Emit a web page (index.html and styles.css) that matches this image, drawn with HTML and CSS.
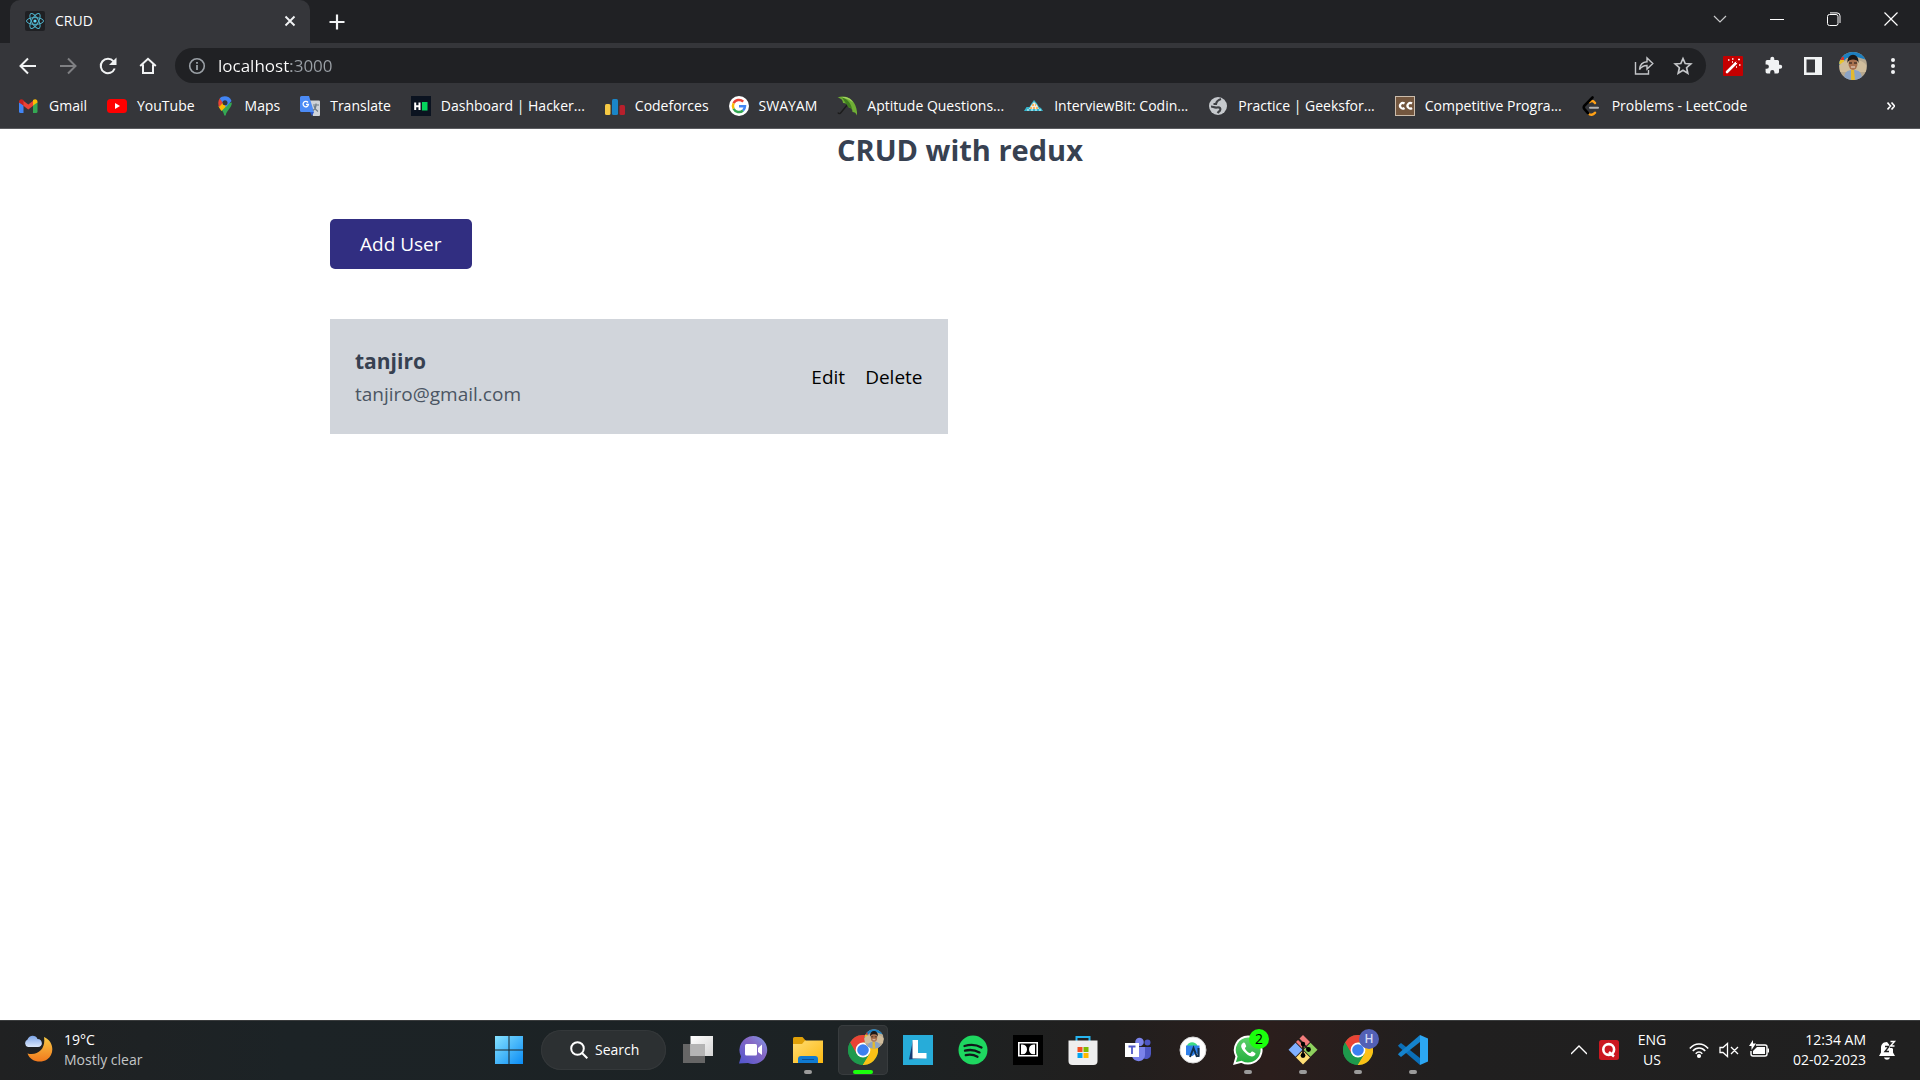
FILE: index.html
```html
<!DOCTYPE html>
<html lang="en">
<head>
<meta charset="utf-8">
<meta name="viewport" content="width=device-width, initial-scale=1">
<title>CRUD</title>
<link rel="stylesheet" href="styles.css">
</head>
<body>
<svg class="defs" width="0" height="0" aria-hidden="true">
  <defs>
    <linearGradient id="g-win" x1="0" y1="0" x2="1" y2="1"><stop offset="0" stop-color="#86e2ff"/><stop offset="1" stop-color="#0a8cf5"/></linearGradient>
    <linearGradient id="g-moon" x1="0" y1="0" x2="0" y2="1"><stop offset="0" stop-color="#f8c945"/><stop offset="1" stop-color="#f2791d"/></linearGradient>
    <linearGradient id="g-cloud" x1="0" y1="0" x2="0" y2="1"><stop offset="0" stop-color="#7ba4e8"/><stop offset="1" stop-color="#dce8fb"/></linearGradient>
    <linearGradient id="g-chat" x1="1" y1="0" x2="0" y2="1"><stop offset="0" stop-color="#7f9be8"/><stop offset=".4" stop-color="#8668c4"/><stop offset="1" stop-color="#4f55cf"/></linearGradient>
    <linearGradient id="g-fold" x1="0" y1="0" x2="1" y2="1"><stop offset="0" stop-color="#ffdc73"/><stop offset="1" stop-color="#fcb910"/></linearGradient>
    <linearGradient id="g-view" x1="0" y1="0" x2="1" y2="1"><stop offset="0" stop-color="#ffffff"/><stop offset="1" stop-color="#d4d4d4"/></linearGradient>
    <linearGradient id="g-wa" x1="0" y1="0" x2="0" y2="1"><stop offset="0" stop-color="#5fd36e"/><stop offset="1" stop-color="#22ad3c"/></linearGradient>
    <clipPath id="c-face"><circle cx="14" cy="14" r="14"/></clipPath>
    <symbol id="chrome" viewBox="0 0 30 30">
      <circle cx="15" cy="15" r="15" fill="#1e9a4c"/>
      <path d="M15 15 2 7.500A15 15 0 0 1 28 7.500H15z" fill="#ea4335"/>
      <path d="M15 7.500h13A15 15 0 0 1 14.500 30L21.500 18.500z" fill="#fbc116"/>
      <path d="M2 7.500 8.500 18.700 15 15V7.500z" fill="#ea4335"/>
      <path d="M2 7.500A15 15 0 0 0 14.500 30l6.800-11.300L15 22l-6.500-3.300z" fill="#1e9a4c"/>
      <circle cx="15" cy="15" r="7.400" fill="#fff"/><circle cx="15" cy="15" r="5.800" fill="#3c80f0"/>
    </symbol>
    <symbol id="face" viewBox="0 0 28 28">
      <g clip-path="url(#c-face)">
        <path fill="#b8a98f" d="M0 0h28v28H0z"/><path fill="#1c7fc0" d="M0 0h28v8L18 5 8 6l-8 7z"/>
        <path fill="#d8342a" d="M0 5h5v3H0z"/><path fill="#e8c22d" d="M0 8h5v4H0z"/>
        <path fill="#d0bd9c" d="M1 13c4-7 22-7 26 0v7H1z"/>
        <path fill="#8ba3c4" d="M5 28c0-8 3-10 9-10s9 2 9 10z"/><path fill="#e3b92f" d="M12 18h3l1 10h-4z"/>
        <ellipse cx="14" cy="12" rx="4.500" ry="6" fill="#a9714f"/><path fill="#1b1716" d="M8.500 11c-1-11 12-11 11 0-1-3-3-3.500-5.500-3.500S9.500 8 8.500 11z"/>
        <path d="M10 11h3m2 0h3" stroke="#1b1716"/><path d="M12 15h4" stroke="#f3e4dc"/>
      </g>
    </symbol>
  </defs>
</svg>

<header class="browser">
  <div class="tabstrip">
    <div class="tab">
      <svg class="icon20" viewBox="0 0 20 20"><rect width="20" height="20" rx="2" fill="#1f2023"/><g fill="none" stroke="#4fb3cc"><ellipse cx="10" cy="10" rx="8.500" ry="3.400"/><ellipse cx="10" cy="10" rx="8.500" ry="3.400" transform="rotate(60 10 10)"/><ellipse cx="10" cy="10" rx="8.500" ry="3.400" transform="rotate(120 10 10)"/></g><circle cx="10" cy="10" r="1.600" fill="#61dafb"/></svg>
      <span class="tab-title">CRUD</span>
      <button class="ibtn tab-close" aria-label="Close tab"><svg width="12" height="12" viewBox="0 0 12 12"><path d="M1.500 1.500l9 9m0-9l-9 9" stroke="#f1f3f4" stroke-width="1.900"/></svg></button>
    </div>
    <button class="ibtn new-tab" aria-label="New tab"><svg width="16" height="16" viewBox="0 0 16 16"><path d="M8 .500v15M.500 8h15" stroke="#f1f3f4" stroke-width="2.200"/></svg></button>
    <div class="window-controls">
      <button class="ibtn wbtn" aria-label="Search tabs"><svg width="14" height="14" viewBox="0 0 14 14"><path d="M1 4l6 6 6-6" fill="none" stroke="#c8c9cb" stroke-width="1.200"/></svg></button>
      <button class="ibtn wbtn" aria-label="Minimize"><svg width="14" height="14" viewBox="0 0 14 14"><path d="M0 7.500h14" stroke="#fff"/></svg></button>
      <button class="ibtn wbtn" aria-label="Restore"><svg width="14" height="14" viewBox="0 0 14 14" fill="none" stroke="#fff"><rect x=".500" y="2.500" width="10.500" height="11" rx="2"/><path d="M3 .900h7a3 3 0 0 1 3 3V11"/></svg></button>
      <button class="ibtn wbtn" aria-label="Close"><svg width="14" height="14" viewBox="0 0 14 14"><path d="M.500.500l13 13m0-13l-13 13" stroke="#fff" stroke-width="1.200"/></svg></button>
    </div>
  </div>

  <div class="toolbar">
    <nav class="nav-buttons" aria-label="Navigation">
      <button class="ibtn tbtn" aria-label="Back"><svg width="18" height="18" viewBox="0 0 18 18" fill="none" stroke="#f1f3f4" stroke-width="2"><path d="M17 9H2M9 1.500L1.500 9 9 16.500"/></svg></button>
      <button class="ibtn tbtn" aria-label="Forward"><svg width="18" height="18" viewBox="0 0 18 18" fill="none" stroke="#7f8083" stroke-width="2"><path d="M1 9h15M9 1.500L16.500 9 9 16.500"/></svg></button>
      <button class="ibtn tbtn" aria-label="Reload"><svg width="18" height="18" viewBox="0 0 18 18"><path d="M15.700 11.500A7.200 7.200 0 1 1 14.500 4.300" fill="none" stroke="#f1f3f4" stroke-width="2"/><path d="M17.500.500V8H10z" fill="#f1f3f4"/></svg></button>
      <button class="ibtn tbtn" aria-label="Home"><svg width="18" height="18" viewBox="0 0 18 18"><path d="M1.200 9L9 1.800 16.800 9M4 7.500V16h10V7.500" fill="none" stroke="#f1f3f4" stroke-width="2"/></svg></button>
    </nav>
    <div class="omnibox">
      <svg width="18" height="18" viewBox="0 0 18 18"><circle cx="9" cy="9" r="7.300" fill="none" stroke="#9aa0a6" stroke-width="1.600"/><path d="M9 8v5M9 5v1.800" stroke="#9aa0a6" stroke-width="1.800"/></svg>
      <input class="url" type="text" value="localhost:3000" aria-label="Address" spellcheck="false">
      <button class="ibtn obtn" aria-label="Share"><svg width="20" height="20" viewBox="0 0 20 20" fill="none" stroke="#c4c6c9" stroke-width="1.400"><path d="M1.500 6v12h13v-4M5.500 13.500C6 8 9 6 13 5.800V2l5.800 5.500L13 13V9.500c-3.500 0-5.500 1-7.500 4z"/></svg></button>
      <button class="ibtn obtn" aria-label="Bookmark this tab"><svg width="20" height="20" viewBox="0 0 20 20"><path d="M10 2.500l2.200 5 5.600.500-4.200 3.700 1.200 5.500L10 14.300l-4.800 2.900 1.200-5.500L2.200 8l5.600-.500z" fill="none" stroke="#c4c6c9" stroke-width="1.700"/></svg></button>
    </div>
    <div class="extensions">
      <button class="ibtn tbtn" aria-label="Magic wand extension"><svg class="icon20" viewBox="0 0 20 20"><rect width="20" height="20" rx="1" fill="#c40000"/><path d="M4 16l9-9" stroke="#fff" stroke-width="2.600" stroke-linecap="round"/><path d="M12.500 5.500l2 2" stroke="#c40000"/><path d="M5 4h1.500M9 3h1.500M9 6h1M15 3.500h2M16 9h1.500M13 11h1" stroke="#fff" stroke-width="1.400"/></svg></button>
      <button class="ibtn tbtn" aria-label="Extensions"><svg width="19" height="19" viewBox="0 0 24 24"><path fill="#f1f3f4" d="M20.500 11H19V7a2 2 0 0 0-2-2h-4V3.500a2.500 2.500 0 0 0-5 0V5H4a2 2 0 0 0-2 2v3.800h1.500a2.700 2.700 0 0 1 0 5.400H2V20a2 2 0 0 0 2 2h3.800v-1.500a2.700 2.700 0 0 1 5.400 0V22H17a2 2 0 0 0 2-2v-4h1.500a2.500 2.500 0 0 0 0-5z"/></svg></button>
      <button class="ibtn tbtn" aria-label="Side panel"><svg width="18" height="18" viewBox="0 0 18 18"><path fill="#f1f3f4" fill-rule="evenodd" d="M0 0h18v18H0zM2.500 2.500v13H11v-13z"/></svg></button>
      <button class="ibtn tbtn" aria-label="Profile"><svg width="28" height="28"><use href="#face"/></svg></button>
      <button class="ibtn tbtn" aria-label="Menu"><svg width="6" height="18" viewBox="0 0 6 18" fill="#f1f3f4"><circle cx="3" cy="3" r="2"/><circle cx="3" cy="9" r="2"/><circle cx="3" cy="15" r="2"/></svg></button>
    </div>
  </div>

  <nav class="bookmarks" aria-label="Bookmarks">
    <a class="bookmark" href="#"><svg class="icon20" viewBox="0 0 20 20"><path fill="#4285f4" d="M0 6l4.500 3v8H1.500A1.500 1.500 0 0 1 0 15.500z"/><path fill="#34a853" d="M18.500 6L14 9v8h3a1.500 1.500 0 0 0 1.500-1.500z"/><path fill="#ea4335" d="M4 4.500l5.300 4 5.200-4V9.500l-5.200 4L4 9.500z"/><path fill="#c5221f" d="M0 6c0-3 2.500-3.500 4.500-2v5.500L0 6.500z"/><path fill="#fbbc04" d="M18.500 6c0-3-2.500-3.500-4.500-2v5.500l4.500-3z"/></svg><span>Gmail</span></a>
    <a class="bookmark" href="#"><svg class="icon20" viewBox="0 0 20 20"><rect y="3" width="20" height="14" rx="3.500" fill="#f00"/><path fill="#fff" d="M8 7v6l5-3z"/></svg><span>YouTube</span></a>
    <a class="bookmark" href="#"><svg class="icon20" viewBox="0 0 20 20"><path fill="#34a853" d="M3.500 10c2 3 5 5 5.800 9.500h1.400C11.500 14 17 12 16.800 6.500z"/><path fill="#fbbc04" d="M3.500 10L8 5.500l4 4-5.500 5.500C5.200 13 4 12 3.500 10z"/><path fill="#ea4335" d="M4.700 2.500L8.500 6 4.200 11C2.800 8 3 5 4.700 2.500z"/><path fill="#4285f4" d="M4.700 2.500C7-.500 14.500-1 16.500 5L11 11l-6.300-8.500z"/><circle cx="10" cy="6.800" r="2.500" fill="#35363a"/></svg><span>Maps</span></a>
    <a class="bookmark" href="#"><svg class="icon20" viewBox="0 0 20 20"><path fill="#cfd3d8" d="M8 4.500h11a1 1 0 0 1 1 1V19a1 1 0 0 1-1 1h-6z"/><path fill="#4c8bf5" d="M1.500 0H9l5 16H1.500A1.500 1.500 0 0 1 0 14.500v-13A1.500 1.500 0 0 1 1.500 0z"/><path fill="#2a56c6" d="M10 16h4l-2 4z"/><path d="M8 6.500A2.700 2.700 0 1 0 8.500 8.300H6" fill="none" stroke="#fff" stroke-width="1.300"/><path d="M13 9h6M16 7.500V9c0 3-1.500 4.500-3 5.500M14 10c1 3 2.500 4.500 4 5.500" fill="none" stroke="#6f7c86" stroke-width="1.200"/></svg><span>Translate</span></a>
    <a class="bookmark" href="#"><svg class="icon20" viewBox="0 0 20 20"><path fill="#0b1320" d="M0 0h20v20H0z"/><path d="M4.200 6.500v7.500M8.500 6.500v7.500M4 10.300h5" stroke="#fff" stroke-width="2"/><path fill="#05d45c" d="M11 6h5.500v8.500H11z"/></svg><span>Dashboard | Hacker...</span></a>
    <a class="bookmark" href="#"><svg class="icon20" viewBox="0 0 20 20"><rect y="8" width="5.500" height="11" rx="1.500" fill="#f6c944"/><rect x="7" y="3" width="6" height="16" rx="1.500" fill="#1a86c8"/><rect x="14.500" y="9" width="5.500" height="10" rx="1.500" fill="#b8202c"/></svg><span>Codeforces</span></a>
    <a class="bookmark" href="#"><svg class="icon20" viewBox="0 0 20 20"><circle cx="10" cy="10" r="10" fill="#fff"/><g fill="none" stroke-width="2.500"><path d="M14.200 5.600A6 6 0 0 0 4.600 7.300" stroke="#ea4335"/><path d="M4.600 7.300a6 6 0 0 0 0 5.400" stroke="#fbbc04"/><path d="M4.600 12.700a6 6 0 0 0 9.400 1.800" stroke="#34a853"/><path d="M14 14.500a6 6 0 0 0 2-4.200h-6" stroke="#4285f4"/></g></svg><span>SWAYAM</span></a>
    <a class="bookmark" href="#"><svg class="icon20" viewBox="0 0 20 20"><path d="M11 8L4 16.500c-1 1.500-2.500 1.500-3 0" fill="none" stroke="#1c1c1c" stroke-width="1.400"/><path fill="#6fae35" d="M.500 1.500C10-2.500 21 5 20 19.500c-1-2.500-2.500-3.500-4.500-3.500 0-3-1.500-4.500-4-4.800C11 8.500 9 7 6 7 6 4 3.500 2 .500 1.500z"/><path fill="#3f7d20" d="M5 1.500c6 1.500 10 7 10.500 14.500 0-3-1.500-4.500-4-4.800z"/><path fill="#a3d45f" d="M5 1.500c4-1.500 9 1 11 5-3-2.500-7-4.500-11-5z"/></svg><span>Aptitude Questions...</span></a>
    <a class="bookmark" href="#"><svg class="icon20" viewBox="0 0 20 20"><path fill="#35b5cc" d="M0 15l2.500-4h3l2-3.500 2.500-3.500 3 3.500 2 3.500 2 1 2 3z"/><path fill="#f6ead7" d="M5 13l2.500-4L10 6l3 3 2 4z"/><path d="M8 9h4M6 12h8" stroke="#f6a43c" stroke-width="1.400" stroke-dasharray="2 1"/><path d="M3 14h14" stroke="#e9fbff" stroke-dasharray="2 2"/></svg><span>InterviewBit: Codin...</span></a>
    <a class="bookmark" href="#"><svg class="icon20" viewBox="0 0 20 20"><circle cx="10" cy="10" r="9" fill="#c6c9cd"/><path fill="none" stroke="#3f4145" stroke-width="2.200" d="M13 3C9.500 4 8.500 5.500 8 8H5.500M3 10.500c2 0 3.500 1.500 6 1 3-.500 4 1 3 3l-2.500 2.500"/></svg><span>Practice | Geeksfor...</span></a>
    <a class="bookmark" href="#"><svg class="icon20" viewBox="0 0 20 20"><rect x=".500" y=".500" width="19" height="19" fill="#74573f" stroke="#cbbcab"/><path d="M9.500 7.500a2.800 2.800 0 1 0 0 4.500M17 7.500a2.800 2.800 0 1 0 0 4.500" fill="none" stroke="#fff" stroke-width="2.200"/></svg><span>Competitive Progra...</span></a>
    <a class="bookmark" href="#"><svg class="icon20" viewBox="0 0 20 20" fill="none" stroke-linecap="round"><path d="M7.500 6c2-1.500 4-1 5.500 1M6.500 17.500c2 2 4.500 1.500 6.500-.800" stroke="#ffa116" stroke-width="2.400"/><path d="M10.500 1.500L2.500 9.500c-1 1.300-1 2.500 0 3.700L6 17.200" stroke="#000" stroke-width="2.600"/><path d="M8 11.700h8" stroke="#b3b3b3" stroke-width="2"/></svg><span>Problems - LeetCode</span></a>
    <button class="ibtn overflow" aria-label="More bookmarks"><svg width="8" height="8" viewBox="0 0 8 8" fill="none" stroke="#fff" stroke-width="1.600"><path d="M.500.500L3.500 4l-3 3.500M4.500.500L7.500 4l-3 3.500"/></svg></button>
  </nav>
</header>

<main class="page">
  <h1 class="title">CRUD with redux</h1>
  <button class="add-user">Add User</button>
  <div class="users">
    <article class="card">
      <div>
        <h2 class="name">tanjiro</h2>
        <p class="email">tanjiro@gmail.com</p>
      </div>
      <div class="actions">
        <button class="link">Edit</button>
        <button class="link">Delete</button>
      </div>
    </article>
  </div>
</main>

<footer class="taskbar">
  <div class="weather">
    <svg width="30" height="30" viewBox="0 0 30 30"><path fill="url(#g-moon)" d="M20 2c10 4 11 17 3 22.500-7 4.500-17 1.500-19.500-6C14 21 22 14 20 2z"/><path fill="url(#g-cloud)" d="M4 12a4 4 0 0 1-.500-7.500C5-.500 12-.500 13.500 4 19 4 19.500 12 14 12z"/></svg>
    <div class="weather-text"><span>19°C</span><span class="dim">Mostly clear</span></div>
  </div>

  <nav class="apps" aria-label="Taskbar">
    <button class="ibtn app" aria-label="Start"><svg width="30" height="30" viewBox="0 0 30 30"><path fill="url(#g-win)" d="M1 1h13.500v13.500H1zM15.500 1H29v13.500H15.500zM1 15.500h13.500V29H1zM15.500 15.500H29V29H15.500z"/></svg></button>
    <button class="search"><svg width="18" height="18" viewBox="0 0 18 18" fill="none" stroke="#fff" stroke-width="2"><circle cx="7.500" cy="7.500" r="6.300"/><path d="M12 12l5.300 5.300"/></svg><span>Search</span></button>
    <button class="ibtn app" aria-label="Task view"><svg width="30" height="30" viewBox="0 0 30 30"><path fill="#666" d="M0 9h22v19H0z"/><path fill="url(#g-view)" d="M7.500 1H30v20H7.500z"/><path fill="#b4b4b4" d="M7.500 9H22v12H7.500z"/></svg></button>
    <button class="ibtn app" aria-label="Chat"><svg width="30" height="30" viewBox="0 0 30 30"><path fill="url(#g-chat)" d="M15 1a14 14 0 1 1-5 27L1 28.500l2-7A14 14 0 0 1 15 1z"/><rect x="7" y="9" width="12" height="11.500" rx="1.500" fill="#fff"/><path fill="#fff" d="M20 13l4-3.500v10.500l-4-3z"/></svg></button>
    <button class="ibtn app" aria-label="File Explorer"><svg width="30" height="30" viewBox="0 0 30 30"><path fill="#e0a008" d="M0 3.500A1.500 1.500 0 0 1 1.500 2h8L13 6l15 0v8H0z"/><path fill="url(#g-fold)" d="M0 9h9l3-3.500h18V28H0z"/><path fill="#0f7ad1" d="M5 28v-4a3 3 0 0 1 3-3h14a3 3 0 0 1 3 3v4z"/><path d="M9 24.500h12" stroke="#0b4f94"/></svg><i class="run"></i></button>
    <button class="ibtn app active" aria-label="Google Chrome"><svg width="30" height="30"><use href="#chrome"/></svg><svg class="badge" width="20" height="20"><use href="#face"/></svg><i class="run on"></i></button>
    <button class="ibtn app" aria-label="Lenovo Vantage"><svg width="30" height="30" viewBox="0 0 30 30"><path fill="#27acd9" d="M0 0h30v30H0z"/><path fill="#143a73" d="M6 24.500L10 5v14l13 4z"/><path fill="#fff" d="M9.500 5H15v13h8.500v5.500h-14z"/></svg></button>
    <button class="ibtn app" aria-label="Spotify"><svg width="30" height="30" viewBox="0 0 30 30"><circle cx="15" cy="15" r="14.500" fill="#1ed760"/><path d="M6.500 11c5.500-1.700 12-1.300 17 1.500M7 15.700c5-1.300 10-.700 14.500 1.700M7.800 20.200c4.200-1 8-.500 11.700 1.500" fill="none" stroke="#10181a" stroke-width="2.300" stroke-linecap="round"/></svg></button>
    <button class="ibtn app" aria-label="Dolby Access"><svg width="30" height="30" viewBox="0 0 30 30"><path d="M0 0h30v30H0z"/><path d="M5.800 7.800h18.400v13H5.800z" fill="none" stroke="#fff" stroke-width="1.600"/><path fill="#fff" d="M8 9.500h1.500c6 0 6 9.800 0 9.800H8zM22 9.500h-1.500c-6 0-6 9.800 0 9.800H22z"/></svg></button>
    <button class="ibtn app" aria-label="Microsoft Store"><svg width="30" height="30" viewBox="0 0 30 30"><path d="M8.500 7V2h13v5" fill="none" stroke="#27b5f0" stroke-width="2"/><path fill="#eee" d="M.500 5.500h29V26a4 4 0 0 1-4 4h-21a4 4 0 0 1-4-4z"/><path fill="#f25022" d="M9.500 12h5v5h-5z"/><path fill="#7fba00" d="M15.500 12h5v5h-5z"/><path fill="#00a4ef" d="M9.500 18h5v5h-5z"/><path fill="#ffb900" d="M15.500 18h5v5h-5z"/></svg></button>
    <button class="ibtn app" aria-label="Microsoft Teams"><svg width="30" height="30" viewBox="0 0 30 30"><circle cx="24.500" cy="7.500" r="3" fill="#4e57c4"/><circle cx="16.500" cy="7" r="4.300" fill="#7b83eb"/><path fill="#4e57c4" d="M20 12h8v7a5 5 0 0 1-8 4z"/><path fill="#7b83eb" d="M9 12h13v7.500c0 8.500-11 8.500-13 2z"/><path fill="#fff" d="M2 8h14v14H2z"/><path d="M5.500 11.500h7M9 11.500V19" stroke="#5059c9" stroke-width="1.800"/></svg></button>
    <button class="ibtn app" aria-label="Android Studio"><svg width="30" height="30" viewBox="0 0 30 30"><circle cx="15" cy="15" r="13" fill="#fff" stroke="#d8d8d8"/><path fill="#3ddc84" d="M9 11c1-5 9-5 10.500 0z"/><path fill="#2f80ea" d="M8 10.500h13.500V21l-3-3-4 3-6.500-1z"/><path d="M12 22l3.500-9L19 22M20.500 13v9" fill="none" stroke="#12304e" stroke-width="2"/></svg></button>
    <button class="ibtn app" aria-label="WhatsApp"><svg width="30" height="30" viewBox="0 0 30 30"><path fill="url(#g-wa)" stroke="#fff" stroke-width="2" d="M15 1.500a13.500 13.500 0 1 1-6.500 25.300L1.500 28.500l2-7A13.500 13.500 0 0 1 15 1.500z"/><path fill="#fff" d="M10 8c-3 2-2 5 1 8.500s7.500 6.500 10.500 4c2-2 1-2.500-2-4-1.500-.500-1.500 2-3 1.500-2-.800-3.800-2.800-4.500-4.500-.300-1.300 1.800-1.200 1-3C12 8 11.500 7 10 8z"/></svg><span class="badge count">2</span><i class="run"></i></button>
    <button class="ibtn app" aria-label="Git"><svg width="30" height="30" viewBox="0 0 30 30"><path fill="#f37c7c" d="M15 0l7 7-7 7-7-7z"/><path fill="#7fb0ff" d="M7.500 7.800l7 7-7 7-7-7z"/><path fill="#8ed15e" d="M22.500 7.800l7 7-7 7-7-7z"/><path fill="#ffdf76" d="M15 15.500l7 7-7 7-7-7z"/><path d="M10 3.500l5 5V21M15 9l5.500 5.500" fill="none" stroke="#2a211c" stroke-width="2"/><circle cx="15" cy="9" r="2.200"/><circle cx="15" cy="20.500" r="2.400"/><circle cx="20.500" cy="14.500" r="2.400"/></svg><i class="run"></i></button>
    <button class="ibtn app" aria-label="Google Chrome, profile H"><svg width="30" height="30"><use href="#chrome"/></svg><span class="badge profile">H</span><i class="run"></i></button>
    <button class="ibtn app" aria-label="Visual Studio Code"><svg width="30" height="30" viewBox="0 0 30 30"><path fill="#0b6fb8" d="M0 10.500L3 8l19 15v7L1 12z"/><path fill="#1583cd" d="M0 19.500L3 22l19-15V0L1 18z"/><path fill="#2ca7f3" d="M22 0l8 3.500v23L22 30z"/></svg><i class="run"></i></button>
  </nav>

  <div class="tray">
    <button class="ibtn" aria-label="Show hidden icons"><svg width="16" height="16" viewBox="0 0 16 16"><path d="M0 12l8-8 8 8" fill="none" stroke="#fff" stroke-width="1.300"/></svg></button>
    <svg class="icon20" viewBox="0 0 20 20"><rect width="20" height="20" rx="2.500" fill="#cb1720"/><circle cx="9.700" cy="9.500" r="5.400" fill="none" stroke="#fff" stroke-width="2.600"/><path d="M10 12l5 4.500" stroke="#fff" stroke-width="2.500"/></svg>
    <div class="lang"><span>ENG</span><span>US</span></div>
    <div class="status">
      <svg class="icon20" viewBox="0 0 20 20" fill="none" stroke="#fff" stroke-width="1.500"><path d="M.800 8.500c5-6 13.400-6 18.400 0M3.800 11c3.500-4 9-4 12.400 0M6.700 13.700c2-2.200 4.600-2.200 6.600 0"/><circle cx="10" cy="16" r="1.300" fill="#fff"/></svg>
      <svg class="icon20" viewBox="0 0 20 20" fill="none" stroke="#fff" stroke-width="1.300"><path d="M1 7.500h3L8.500 3.500v13L4 12.500H1zM12 7l7 7M19 7l-7 7"/></svg>
      <svg class="icon20" viewBox="0 0 20 20"><path d="M7 5h9a2 2 0 0 1 2 2v7a2 2 0 0 1-2 2H4a2 2 0 0 1-2-2v-3" fill="none" stroke="#fff" stroke-width="1.400"/><path fill="#fff" d="M8 7h8v7H4v-3zM18.500 8.500H20v4h-1.500zM4 0v3.500H7L2.500 10V6H0z"/></svg>
    </div>
    <div class="clock"><time>12:34 AM</time><time>02-02-2023</time></div>
    <svg class="icon20" viewBox="0 0 20 20"><path fill="#fff" d="M9 2C4.500 2 3 5 3 8v4.500L1 16h16l-2-3.500V9L9 2zM6 17.500h6c-1 3-5 3-6 0z"/><path d="M7 6.500h4l-4 5h4" fill="none" stroke="#202020" stroke-width="1.400"/><path fill="#202020" d="M10 0h8v8h-6z"/><path d="M12.500 1.500h4l-4 4.500h4" fill="none" stroke="#fff" stroke-width="1.400"/></svg>
  </div>
</footer>
</body>
</html>
```
FILE: styles.css
```css
* { box-sizing: border-box; }

body {
  margin: 0;
  min-height: 100vh;
  display: flex;
  flex-direction: column;
  background: #fff;
  color: #000;
  font-family: "Open Sans", "Noto Sans", sans-serif;
  font-size: 14px;
  line-height: 20px;
}

.defs { position: absolute; }

svg { display: block; flex: none; }

button {
  font: inherit;
  border: 0;
  padding: 0;
  background: none;
  color: inherit;
}

.ibtn {
  display: flex;
  align-items: center;
  justify-content: center;
  flex: none;
}

.icon20 { width: 20px; height: 20px; }

/* Browser frame */
.browser {
  background: #35363a;
  color: #fff;
  border-bottom: 1px solid #5b5c60;
}

.tabstrip {
  display: flex;
  height: 43px;
  padding-left: 10px;
  background: #202124;
}

.tab {
  display: flex;
  align-items: center;
  gap: 10px;
  width: 300px;
  padding: 0 14px 2px 15px;
  background: #35363a;
  border-radius: 10px 10px 0 0;
}

.tab-title { flex: 1; }

.new-tab { width: 34px; margin-left: 10px; }

.window-controls {
  display: flex;
  margin-left: auto;
  padding-right: 1px;
  height: 37px;
}

.wbtn { width: 57px; }

.toolbar {
  display: flex;
  align-items: center;
  height: 45px;
  padding: 0 7px 0 8px;
}

.nav-buttons, .extensions { display: flex; }

.tbtn { width: 40px; height: 36px; }

.omnibox {
  flex: 1;
  display: flex;
  align-items: center;
  height: 35px;
  margin: 0 7px;
  padding: 0 4px 0 13px;
  border-radius: 18px;
  background: #202124;
}

.url {
  flex: 1;
  min-width: 0;
  margin-left: 12px;
  padding: 0;
  border: 0;
  outline: 0;
  font: inherit;
  font-size: 17px;
  line-height: 24px;
  color: #fff;
  background: linear-gradient(90deg, #fff 73px, #9aa0a6 73px);
  -webkit-background-clip: text;
  background-clip: text;
  -webkit-text-fill-color: transparent;
}

.obtn { width: 39px; height: 34px; }

.bookmarks {
  display: flex;
  align-items: center;
  gap: 20px;
  height: 40px;
  padding: 0 25px 4px 19px;
}

.bookmark {
  display: flex;
  align-items: center;
  gap: 10px;
  color: #fff;
  text-decoration: none;
  white-space: nowrap;
}

.overflow { margin-left: auto; }

/* Page content */
.page {
  flex: 1;
  width: 100%;
  max-width: 1280px;
  margin: 0 auto;
  padding: 0 10px;
  font-size: 19px;
  line-height: 30px;
}

.title {
  margin: 0 0 48px;
  font-size: 29px;
  line-height: 42px;
  text-align: center;
  color: #374151;
}

.add-user {
  display: block;
  padding: 10px 30px;
  border-radius: 5px;
  background: #312e81;
  color: #fff;
}

.users {
  display: grid;
  grid-template-columns: 1fr 1fr;
  gap: 25px;
  margin-top: 50px;
}

.card {
  display: flex;
  align-items: center;
  justify-content: space-between;
  padding: 25px;
  background: #d1d5db;
}

.name {
  margin: 0;
  font-size: 21px;
  line-height: 35px;
  color: #374151;
}

.email { margin: 0; color: #4b5563; }

.actions { display: flex; gap: 20px; }

/* Taskbar */
.taskbar {
  display: grid;
  grid-template-columns: 1fr auto 1fr;
  align-items: center;
  height: 60px;
  padding-bottom: 1px;
  border-top: 1px solid #3a3c3d;
  background: linear-gradient(90deg, #202122, #1c2326 15%, #1c2224 45%, #211f1e 58%, #2b1e1c 66%, #201f1f 75%, #202020);
  color: #fff;
}

.weather {
  display: flex;
  align-items: center;
  gap: 10px;
  padding-left: 24px;
}

.weather-text, .lang, .clock { display: flex; flex-direction: column; }

.dim { color: #c4c6c7; }

.apps { display: flex; align-items: center; gap: 5px; padding-left: 2px; }

.app {
  position: relative;
  width: 50px;
  height: 50px;
  border-radius: 5px;
}

.active { background: #2d3133; box-shadow: inset 0 0 0 1px #383c3e; }

.run {
  position: absolute;
  bottom: 1px;
  left: 21px;
  width: 8px;
  height: 4px;
  border-radius: 2px;
  background: #9b9b9b;
}

.on { left: 15px; width: 20px; background: #1bff0d; }

.badge {
  position: absolute;
  top: 4px;
  right: 4px;
  width: 20px;
  height: 20px;
  border-radius: 10px;
  text-align: center;
}

.count { background: #1bff0d; color: #000; }

.profile { background: #5360b5; color: #d5daf5; font-size: 12px; font-weight: 600; }

.search {
  display: flex;
  align-items: center;
  gap: 7px;
  width: 125px;
  height: 40px;
  margin: 0 2px;
  padding-left: 29px;
  border-radius: 20px;
  background: #2c3032;
  box-shadow: inset 0 0 0 1px #34383a;
}

.tray {
  display: flex;
  align-items: center;
  justify-content: flex-end;
  padding-right: 22px;
}

.tray > .icon20 { margin-left: 12px; }

.lang { width: 66px; text-align: center; }

.status { display: flex; gap: 10px; margin-left: 4px; }

.clock { width: 97px; text-align: right; }
```
